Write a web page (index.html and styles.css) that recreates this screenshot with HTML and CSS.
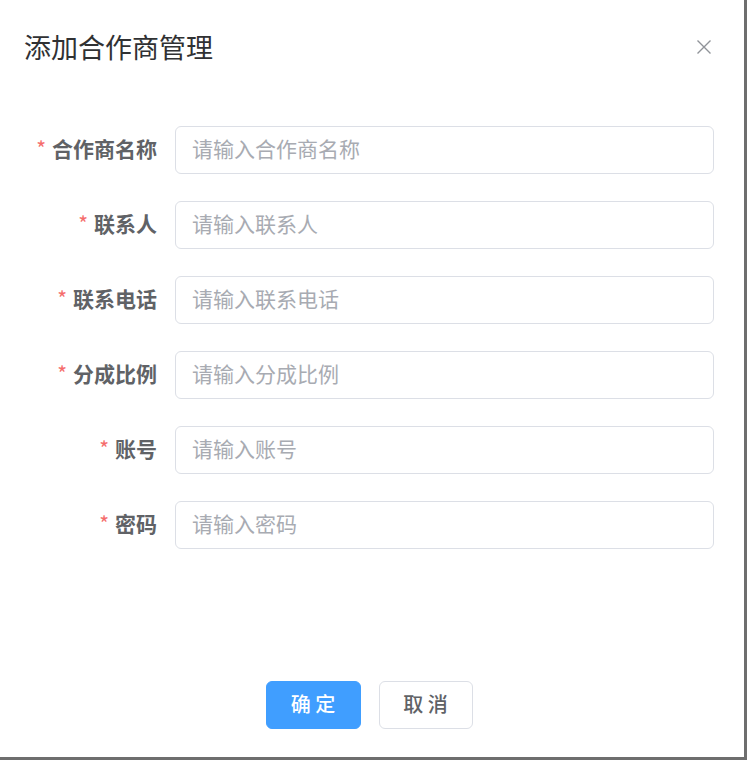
FILE: index.html
```html
<!DOCTYPE html>
<html lang="zh-CN">
<head>
<meta charset="utf-8">
<title>添加合作商管理</title>
<link rel="stylesheet" href="styles.css">
</head>
<body>
<div class="dialog">
  <div class="header">
    <span class="title">添加合作商管理</span>
    <button class="close" aria-label="关闭">
      <svg width="16" height="16" viewBox="0 0 16 16"><path d="M1.5 1.5 L14.5 14.5 M14.5 1.5 L1.5 14.5" stroke="#909399" stroke-width="1.4" fill="none"/></svg>
    </button>
  </div>
  <form class="form">
    <div class="row"><label class="label"><span class="req">*</span>合作商名称</label><input class="input" placeholder="请输入合作商名称"></div>
    <div class="row"><label class="label"><span class="req">*</span>联系人</label><input class="input" placeholder="请输入联系人"></div>
    <div class="row"><label class="label"><span class="req">*</span>联系电话</label><input class="input" placeholder="请输入联系电话"></div>
    <div class="row"><label class="label"><span class="req">*</span>分成比例</label><input class="input" placeholder="请输入分成比例"></div>
    <div class="row"><label class="label"><span class="req">*</span>账号</label><input class="input" placeholder="请输入账号"></div>
    <div class="row"><label class="label"><span class="req">*</span>密码</label><input class="input" placeholder="请输入密码"></div>
  </form>
  <div class="footer">
    <button class="btn primary">确 定</button>
    <button class="btn plain">取 消</button>
  </div>
</div>
</body>
</html>
```
FILE: styles.css
```css
html, body {
  margin: 0;
  padding: 0;
}
body {
  background: #6e6e6e;
  font-family: "Noto Sans CJK SC", "Noto Sans", sans-serif;
  width: 747px;
  height: 760px;
  overflow: hidden;
}
.dialog {
  width: 744px;
  height: 757px;
  background: #ffffff;
  display: flex;
  flex-direction: column;
}
.header {
  display: flex;
  align-items: center;
  justify-content: space-between;
  padding: 30px 32px 0 24px;
  height: 34px;
}
.title {
  font-size: 27px;
  line-height: 34px;
  color: #303133;
  font-weight: 400;
}
.close {
  border: 0;
  background: none;
  padding: 0;
  width: 16px;
  height: 16px;
  display: flex;
  cursor: pointer;
}
.form {
  margin: 62px 30px 0 0;
  display: flex;
  flex-direction: column;
  gap: 27px;
}
.row {
  display: grid;
  grid-template-columns: 175px 1fr;
  height: 48px;
}
.label {
  font-size: 21px;
  font-weight: 700;
  color: #606266;
  text-align: right;
  padding-right: 18px;
  line-height: 45px;
}
.req {
  color: #f56c6c;
  margin-right: 6px;
  font-weight: 400;
}
.input {
  box-sizing: border-box;
  height: 48px;
  border: 1px solid #dcdfe6;
  border-radius: 6px;
  padding: 0 16px 4px;
  font-family: "Noto Sans CJK SC", "Noto Sans", sans-serif;
  font-size: 21px;
  color: #606266;
  outline: none;
}
.input::placeholder {
  color: #a8abb2;
}
.footer {
  margin-top: 132px;
  display: flex;
  justify-content: center;
  gap: 18px;
  padding-right: 6px;
}
.btn {
  box-sizing: border-box;
  height: 48px;
  border-radius: 6px;
  padding: 0 0 3px;
  font-family: "Noto Sans CJK SC", "Noto Sans", sans-serif;
  font-size: 20px;
  font-weight: 500;
  cursor: pointer;
}
.primary {
  width: 95px;
  background: #409eff;
  border: 1px solid #409eff;
  color: #ffffff;
}
.plain {
  width: 94px;
  background: #ffffff;
  border: 1px solid #dcdfe6;
  color: #606266;
}
```
